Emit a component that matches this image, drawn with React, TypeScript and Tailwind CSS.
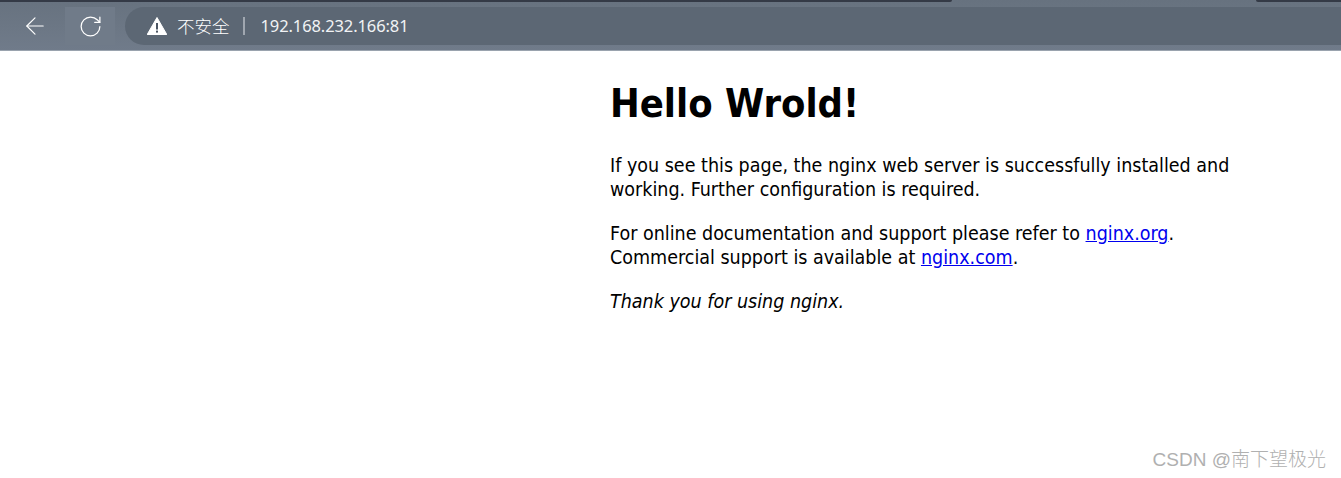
import { ArrowLeft, RotateCw } from "lucide-react";

function Warning() {
  return (
    <svg width="20" height="18" viewBox="0 0 20 18">
      <path d="M10 0.5 L19.8 17.5 L0.2 17.5 Z" fill="#fff" stroke="#fff" strokeLinejoin="round" />
      <rect x="9" y="6" width="2" height="6.5" fill="#4b5563" />
      <rect x="9" y="13.6" width="2" height="2" fill="#4b5563" />
    </svg>
  );
}

export default function App() {
  return (
    <div className="relative h-[478px] overflow-hidden bg-white font-['DejaVu_Sans_Condensed','Noto_Sans_CJK_SC',sans-serif]">
      <header className="h-[51px] border-b border-[#9aa3ae] bg-gradient-to-b from-[#67727f] to-[#707b8a] font-['Noto_Sans','Noto_Sans_CJK_SC',sans-serif]">
        <div className="flex h-[2px] justify-between">
          <div className="w-[952px] rounded-br-sm bg-[#343a46]" />
          <div className="w-[85px] rounded-bl-sm bg-[#343a46]" />
        </div>
        <div className="flex items-center pt-[5px]">
          <div className="flex h-[38px] w-[65px] items-center justify-center pl-[5px] text-white">
            <ArrowLeft size={28} strokeWidth={1} />
          </div>
          <div className="flex h-[38px] w-[50px] items-center justify-center bg-[#707b89] text-white">
            <RotateCw size={25} strokeWidth={1.2} />
          </div>
          <div className="ml-[10px] flex h-[38px] flex-1 items-center rounded-l-[19px] bg-[#5c6774] pl-[22px] text-white">
            <Warning />
            <span className="ml-[10px] text-[17.5px] font-light">不安全</span>
            <span className="ml-[13px] h-[18px] w-[2px] bg-[#a0a7b0]" />
            <span className="ml-[16px] text-[16.5px] tracking-[-0.1px] text-[#f1f3f5]">192.168.232.166:81</span>
          </div>
        </div>
      </header>
      <main className="pl-[610px] text-[19.5px] leading-[24px] text-black">
        <h1 className="mt-[29px] text-[39.5px] font-bold leading-[46px]">Hello Wrold!</h1>
        <p className="mt-[28px]">
          If you see this page, the nginx web server is successfully installed and
          <br />
          working. Further configuration is required.
        </p>
        <p className="mt-[20px]">
          For online documentation and support please refer to{" "}
          <a href="#" className="text-[#0000ee] underline">nginx.org</a>.
          <br />
          Commercial support is available at{" "}
          <a href="#" className="text-[#0000ee] underline">nginx.com</a>.
        </p>
        <p className="mt-[20px] italic">Thank you for using nginx.</p>
      </main>
      <div className="absolute right-[15px] top-[447px] font-['Liberation_Sans','Noto_Sans_CJK_SC',sans-serif] text-[19px] font-light leading-[26px] text-[#b0b0b0]">
        CSDN @南下望极光
      </div>
    </div>
  );
}
